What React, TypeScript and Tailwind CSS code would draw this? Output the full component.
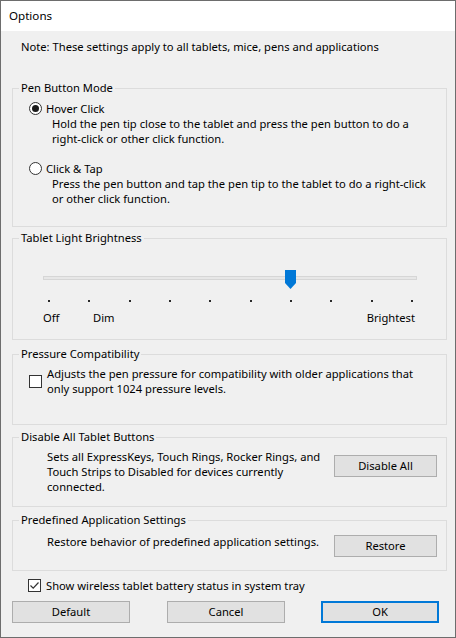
import type { ReactNode } from "react";

function Group({
  label,
  className,
  children,
}: {
  label: string;
  className: string;
  children: ReactNode;
}) {
  return (
    <fieldset className={`ml-[11px] w-[435px] border border-[#dcdcdc] ${className}`}>
      <legend className="ml-[6px] px-[2px] leading-[16px]">{label}</legend>
      {children}
    </fieldset>
  );
}

function Radio({ checked }: { checked?: boolean }) {
  return (
    <span className="flex h-[13px] w-[13px] shrink-0 items-center justify-center rounded-full border border-[#333333] bg-white">
      {checked ? <span className="h-[7px] w-[7px] rounded-full bg-[#1a1a1a]" /> : null}
    </span>
  );
}

function Checkbox({ checked }: { checked?: boolean }) {
  return (
    <span className="flex h-[13px] w-[13px] shrink-0 items-center justify-center border border-[#333333] bg-white">
      {checked ? (
        <svg width="11" height="11" viewBox="0 0 11 11">
          <path d="M1.5 5.5 L4.2 8.2 L9.5 2.5" fill="none" stroke="#333333" strokeWidth="1.2" />
        </svg>
      ) : null}
    </span>
  );
}

function Button({
  children,
  primary,
  className,
}: {
  children: ReactNode;
  primary?: boolean;
  className: string;
}) {
  return (
    <button
      type="button"
      className={`flex h-[22px] shrink-0 items-center justify-center bg-[#e1e1e1] leading-[16px] ${className} ${
        primary ? "border-2 border-[#0078d7]" : "border border-[#adadad]"
      }`}
    >
      {children}
    </button>
  );
}

const ticks = Array.from({ length: 10 }, (_, i) => i);

export default function App() {
  return (
    <div className="flex h-[638px] w-[456px] flex-col border border-[#6d6d6d] bg-[#f0f0f0] font-['Segoe_UI','Noto_Sans',sans-serif] text-[11.2px] leading-[15px] text-black">
      <div className="flex h-[30px] shrink-0 items-center bg-white pl-[8px] text-[11.6px] leading-[16px]">
        Options
      </div>

      <p className="mt-[8px] pl-[20px] leading-[16px]">
        Note: These settings apply to all tablets, mice, pens and applications
      </p>

      <Group label="Pen Button Mode" className="mt-[25px] h-[147px]">
        <div className="pt-[5px]">
          <div className="flex items-center gap-[4px] pl-[16px]">
            <Radio checked />
            <span>Hover Click</span>
          </div>
          <p className="whitespace-nowrap pl-[39px]">
            Hold the pen tip close to the tablet and press the pen button to do a
            <br />
            right-click or other click function.
          </p>
          <div className="mt-[15px] flex items-center gap-[4px] pl-[16px]">
            <Radio />
            <span>Click &amp; Tap</span>
          </div>
          <p className="whitespace-nowrap pl-[39px]">
            Press the pen button and tap the pen tip to the tablet to do a right-click
            <br />
            or other click function.
          </p>
        </div>
      </Group>

      <Group label="Tablet Light Brightness" className="mt-[3px] h-[110px]">
        <div className="relative ml-[30px] mt-[30px] h-[4px] w-[374px] border border-[#d6d6d6] bg-[#e7e7e7]">
          <svg
            className="absolute left-[241px] top-[-7px]"
            width="11"
            height="19"
            viewBox="0 0 11 19"
          >
            <polygon points="0,0 11,0 11,13 5.5,19 0,13" fill="#0078d7" />
          </svg>
        </div>
        <div className="ml-[35px] mt-[20px] flex w-[365px] justify-between">
          {ticks.map((t) => (
            <span key={t} className="h-[2px] w-[2px] bg-[#2a2a2a]" />
          ))}
        </div>
        <div className="mt-[8px] flex pl-[30px] pr-[31px] leading-[16px]">
          <span className="w-[50px]">Off</span>
          <span>Dim</span>
          <span className="ml-auto">Brightest</span>
        </div>
      </Group>

      <Group label="Pressure Compatibility" className="mt-[6px] h-[79px]">
        <div className="flex items-center gap-[5px] pl-[16px] pt-[4px]">
          <Checkbox />
          <p className="whitespace-nowrap">
            Adjusts the pen pressure for compatibility with older applications that
            <br />
            only support 1024 pressure levels.
          </p>
        </div>
      </Group>

      <Group label="Disable All Tablet Buttons" className="mt-[4px] h-[78px]">
        <div className="flex items-start pl-[34px] pr-[9px] pt-[4px]">
          <p className="whitespace-nowrap">
            Sets all ExpressKeys, Touch Rings, Rocker Rings, and
            <br />
            Touch Strips to Disabled for devices currently
            <br />
            connected.
          </p>
          <Button className="ml-auto mt-[6px] w-[103px]">Disable All</Button>
        </div>
      </Group>

      <Group label="Predefined Application Settings" className="mt-[5px] h-[59px]">
        <div className="flex items-start pl-[34px] pr-[9px] pt-[6px]">
          <p className="whitespace-nowrap">Restore behavior of predefined application settings.</p>
          <Button className="ml-auto mt-[1px] w-[103px]">Restore</Button>
        </div>
      </Group>

      <div className="mt-[7px] flex items-center gap-[5px] pl-[27px]">
        <Checkbox checked />
        <span>Show wireless tablet battery status in system tray</span>
      </div>

      <div className="mt-[8px] flex pl-[11px]">
        <Button className="w-[118px]">Default</Button>
        <Button className="ml-[37px] w-[118px]">Cancel</Button>
        <Button primary className="ml-[36px] w-[118px]">
          OK
        </Button>
      </div>
    </div>
  );
}
